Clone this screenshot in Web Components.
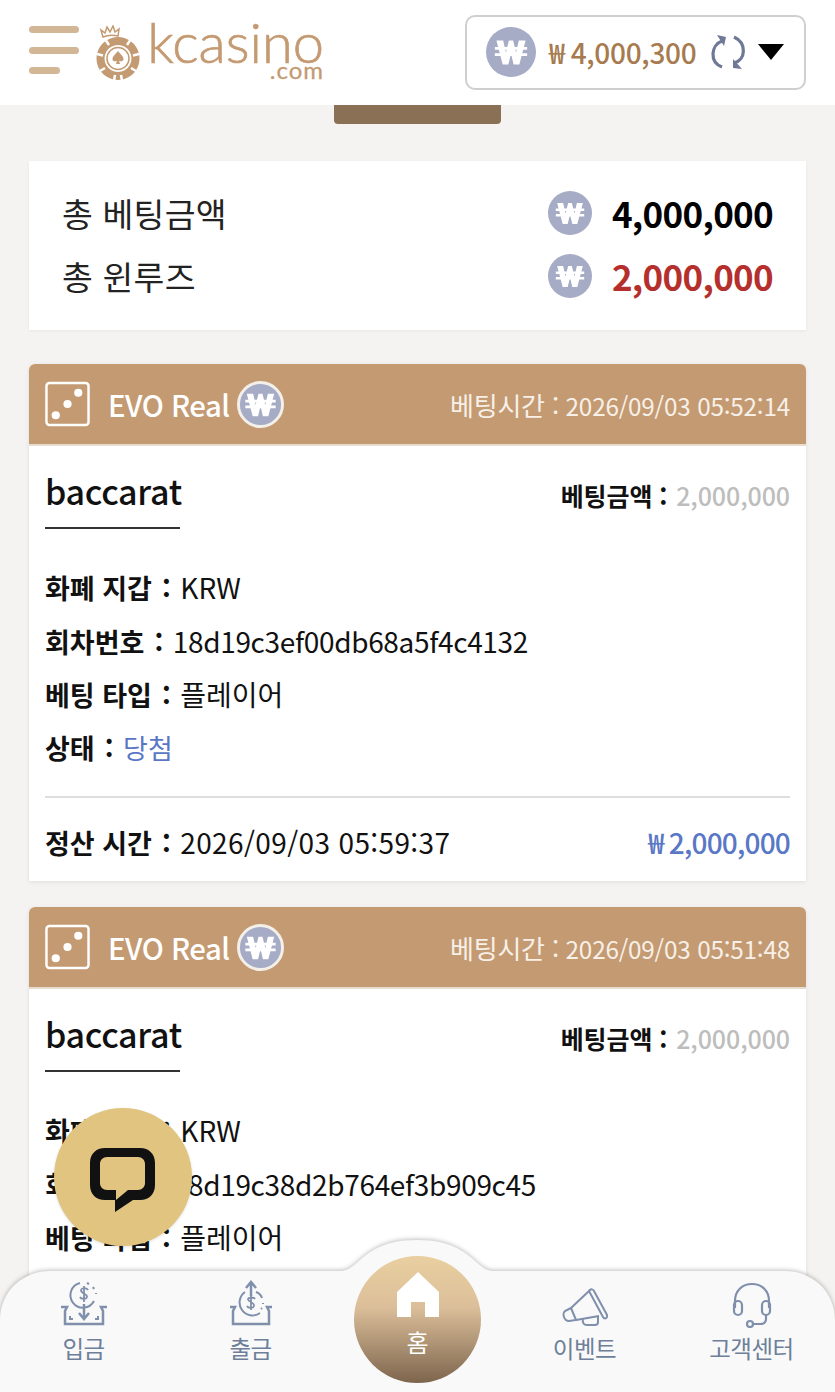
<!DOCTYPE html>
<html lang="ko"><head><meta charset="utf-8"><title>kcasino</title>
<style>
html,body{margin:0;padding:0;background:#f4f3f1}
body{width:835px;height:1392px;overflow:hidden;font-family:"Noto Sans CJK KR","Noto Sans",sans-serif;color:#111}
</style></head>
<body>
<k-app>
  <k-header slot="header"></k-header>
  <k-summary>
    <k-sumrow label="총 베팅금액" value="4,000,000"></k-sumrow>
    <k-sumrow label="총 윈루즈" value="2,000,000" color="#b5302d"></k-sumrow>
  </k-summary>
  <bet-card time="2026/09/03 05:52:14" round="18d19c3ef00db68a5f4c4132" settle="2026/09/03 05:59:37"></bet-card>
  <bet-card time="2026/09/03 05:51:48" round="18d19c38d2b764ef3b909c45"></bet-card>
</k-app>
<script>
const FONT='"Noto Sans CJK KR","Noto Sans",sans-serif';
function el(tag,html,css){
  customElements.define(tag,class extends HTMLElement{
    connectedCallback(){
      if(this.shadowRoot)return;
      const a=n=>this.getAttribute(n)||'';
      this.attachShadow({mode:'open'}).innerHTML='<style>'+css+'</style>'+html(a);
    }
  });
}
el('won-coin',a=>`<svg viewBox="0 0 48 48" width="100%" height="100%"><circle cx="24" cy="24" r="${a('ring')?22.5:24}" fill="#a6abc6" ${a('ring')?'stroke="#f3efe9" stroke-width="3"':''}/>
<path d="M10 13h6.500l2.600 11.500L22 13h4l2.900 11.500L31.500 13H38l-6 23h-5.500L24 25.500 21.500 36H16z" fill="#fff"/><path d="M8.500 20.500h31M8.500 26.500h31" stroke="#fff" stroke-width="2.800"/></svg>`,
':host{display:inline-block;width:48px;height:48px;flex:none}svg{display:block}');

el('k-app',()=>`<slot name="header"></slot><main><div class="tab"></div><slot></slot></main><k-chat></k-chat><k-nav></k-nav>`,
`:host{display:block;position:relative;width:835px;height:1392px;overflow:hidden}
main{display:flex;flex-direction:column;gap:26px;padding:56px 29px 0 29px;position:relative}
.tab{position:absolute;left:334px;top:0;width:167px;height:19px;background:#8a7054;border-radius:0 0 4px 4px}`);

el('k-header',()=>`<button class="burger" aria-label="menu"><i style="width:50px"></i><i style="width:50px"></i><i style="width:31px"></i></button>
<div class="logo">
<svg width="46" height="56" viewBox="0 0 46 56">
 <g fill="none" stroke="#c49a72" stroke-width="1.500"><path d="M8 12L6 5l4 3 2-6 3 5 3-6 2 6 4-3-1 7c-5-1-10-1-15 1z"/></g>
 <g fill="#c49a72"><path fill-rule="evenodd" d="M23 12a21.500 21.500 0 1 0 .01 0zM23 20a13.500 13.500 0 1 1-.01 0z" />
 <circle cx="23" cy="33.500" r="11" fill="none" stroke="#c49a72" stroke-width="1.500"/>
 <path d="M23 26c2 3 5.500 5 5.500 8 0 2.500-3 3-4.500 1.500l1 3.500h-4l1-3.500c-1.500 1.500-4.500 1-4.500-1.500 0-3 3.500-5 5.500-8z"/></g>
 <g stroke="#fff" stroke-width="2.500"><path d="M11 15.500l3 4.500M35 15.500l-3 4.500M2 29l6 1.500M44 29l-6 1.500M5 46l5-3M41 46l-5-3M19 56l1-6M27 56l-1-6"/></g>
</svg>
<div class="word"><span class="k">kcasino</span><span class="com">.com</span></div></div>
<div class="wallet"><won-coin style="width:50px;height:50px"></won-coin><span class="amt">₩ 4,000,300</span>
<svg class="sync" width="36" height="36" viewBox="0 0 36 36" fill="none" stroke="#6f7896" stroke-width="3.200"><path d="M12 7C1 11-1 28 12 33"/><path d="M7 1l9 2-2 9z" fill="#6f7896" stroke="none"/><path d="M24 3c13 6 12 23 0 26"/><path d="M32 35l-9-1v-9z" fill="#6f7896" stroke="none"/></svg>
<span class="caret"></span></div>`,
`:host{display:flex;align-items:center;height:105px;background:#fff;padding:0 29px;box-sizing:border-box;font-family:${FONT};position:relative;z-index:2}
.burger{all:unset;display:flex;flex-direction:column;gap:13.500px;width:50px;margin-top:-5px}
.burger i{display:block;height:7px;border-radius:4px;background:#d3b695}
.logo{display:flex;align-items:flex-start;gap:11px;margin-left:16px;align-self:flex-start;margin-top:25px}
.word{display:flex;flex-direction:column;align-items:flex-end;color:#c49a72;font-family:"Lato",sans-serif;margin-top:-3px;width:172px}
.k{display:block;font-size:56px;font-weight:300;line-height:40px;white-space:nowrap;-webkit-text-stroke:.7px #c49a72}
.com{display:block;font-size:24px;font-weight:400;letter-spacing:1px;margin-top:-1px;line-height:18px;-webkit-text-stroke:.3px #c49a72}
.wallet{margin-left:auto;width:341px;height:75px;box-sizing:border-box;border:2px solid #cfcfcf;border-radius:10px;display:flex;align-items:center;padding:0 19px;margin-top:-1px}
.amt{font-size:28px;font-weight:500;color:#a67b4f;margin-left:13px;letter-spacing:-.3px;white-space:nowrap;word-spacing:0}
.sync{margin-left:14px;flex:none}
.caret{margin-left:12px;width:0;height:0;border:13px solid transparent;border-top:16px solid #000;border-bottom:0}`);

el('k-summary',()=>`<slot></slot>`,
`:host{display:flex;flex-direction:column;gap:8px;height:169px;box-sizing:border-box;padding:24px 33px 0;background:#fff;box-shadow:0 1px 3px rgba(0,0,0,.06);margin-bottom:8px;justify-content:flex-start}`);
el('k-sumrow',a=>`<span class="l">${a('label')}</span><won-coin style="width:44px;height:44px"></won-coin><b style="color:${a('color')||'#000'}">${a('value')}</b>`,
`:host{display:flex;align-items:center;height:55px;font-family:${FONT}}
.l{font-size:33.500px;flex:1;color:#222;letter-spacing:.2px}
b{font-size:35px;font-weight:700;margin-left:19px;width:162px;text-align:right;letter-spacing:-.7px;white-space:nowrap}`);

el('bet-card',a=>`<header>
<svg width="45" height="46" viewBox="0 0 46 46"><rect x="1.500" y="1.500" width="43" height="43" rx="3" fill="none" stroke="#fff" stroke-width="2.500"/><circle cx="34" cy="11.500" r="4.200" fill="#fff"/><circle cx="23" cy="23" r="4.200" fill="#fff"/><circle cx="11" cy="34.500" r="4.200" fill="#fff"/></svg>
<span class="evo">EVO Real</span><won-coin ring="1" style="width:47px;height:47px"></won-coin>
<span class="t"><span class="tk">베팅시간 :</span> ${a('time')}</span></header>
<section>
<div class="top"><h2>baccarat</h2><div class="bet"><b>베팅금액 :</b> <span>2,000,000</span></div></div>
<ul>
<li><b>화폐 지갑<i>:</i></b> <span class="v">KRW</span></li>
<li><b>회차번호<i>:</i></b> <span class="v r">${a('round')}</span></li>
<li><b>베팅 타입<i>:</i></b> <span class="v">플레이어</span></li>
${a('settle')?`<li><b>상태<i>:</i></b> <span class="win v">당첨</span></li>`:''}
</ul>
${a('settle')?`<footer><div><b>정산 시간<i>:</i></b> <span class="v d">${a('settle')}</span></div><div class="pay">₩ 2,000,000</div></footer>`:''}
</section>`,
`:host{display:block;background:#fff;border-radius:6px 6px 0 0;box-shadow:0 1px 4px rgba(0,0,0,.09);font-family:${FONT};color:#111;min-height:484px}
header{background:#c49a72;border-radius:6px 6px 0 0;display:flex;align-items:center;padding:0 16px;color:#fff;border-bottom:2px solid #e6dccf;box-sizing:border-box;height:82px}
.evo{font-size:29.300px;font-weight:500;margin:0 7px 0 18px;letter-spacing:-.5px;white-space:nowrap}
.t{margin-left:auto;font-size:24.300px;letter-spacing:-.2px;color:#f7f0e8;white-space:nowrap}
.tk{font-size:26px;letter-spacing:-.2px}
section{padding:0 16px}
.top{display:flex;justify-content:space-between;align-items:flex-start;height:82px;padding-top:19px;box-sizing:border-box}
h2{margin:0;font-size:34px;font-weight:500;line-height:52px;width:135px;height:64px;box-sizing:border-box;border-bottom:2px solid #333;letter-spacing:-.3px;white-space:nowrap}
.bet{font-size:25px;margin-top:12px;white-space:nowrap;letter-spacing:-.1px}
.bet b{font-weight:700}.bet span{color:#bdbdbd;font-weight:500;margin-left:2px;font-size:25px;letter-spacing:-.1px}
ul{list-style:none;margin:0;padding:40px 0 0;display:flex;flex-direction:column;gap:15.700px}
li{height:38px;line-height:38px;font-size:27px;white-space:nowrap}
b{font-weight:700}
b i{font-style:normal;margin-left:10px;margin-right:2px}
.v{font-size:28px}
.r{letter-spacing:-.33px}
.d{letter-spacing:.37px}
.win{color:#5a77c6;font-size:27px}
footer{margin-top:29px;border-top:2px solid #dedede;display:flex;justify-content:space-between;align-items:center;height:85px;font-size:27px;padding-top:4px;box-sizing:border-box;white-space:nowrap}
.pay{color:#5a77c6;font-weight:500;font-size:28px;letter-spacing:-.8px;word-spacing:0}`);

el('k-chat',()=>`<svg width="76" height="76" viewBox="0 0 76 76"><path fill-rule="evenodd" fill="#111" d="M20 9h35c9 0 15 6 15 15v22c0 9-6 15-15 15h-7L30 73V61h-10C11 61 5 55 5 46V24C5 15 11 9 20 9zM22 18c-4 0-7 3-7 7v19c0 4 3 7 7 7h9v10l12-10h10c4 0 7-3 7-7V25c0-4-3-7-7-7z"/></svg>`,
`:host{position:absolute;left:54px;top:1108px;width:138px;height:138px;border-radius:50%;background:#e0c47f;display:flex;align-items:center;justify-content:center;z-index:3;box-shadow:0 1px 3px rgba(0,0,0,.12)}`);

const G='#7f8fac';
const ICON={
dep:`<svg width="48" height="48" viewBox="0 0 48 48" fill="none" stroke="${G}" stroke-width="2"><path d="M20 3A12.500 12.500 0 1 0 34 21"/><path d="M27 3l2 1M33 7l1 2M36 13v1"/><path d="M28 10c-1-2-6-3-7 0s7 4 6 7-6 2-7 0M24 6v16" stroke-width="1.800"/><path d="M24 24v14M19 33l5 6 5-6" stroke-width="2.500"/><path d="M1 27h6l-2 4v13h38V31l-2-4h6M5 44h38" stroke-width="2.500"/><path d="M10 36v3h3M38 36v3h-3"/></svg>`,
wd:`<svg width="44" height="48" viewBox="0 0 44 48" fill="none" stroke="${G}" stroke-width="2"><path d="M22 16V3M17 8l5-6 5 6" stroke-width="2.500"/><path d="M16 12A11.500 11.500 0 1 0 31 33"/><path d="M27 12c3 1 5 3 6 6M34 23v1M33 28l-1 1"/><path d="M26 19c-1-2-6-2-7 0s7 4 6 7-6 2-7 0M22 15v15" stroke-width="1.800"/><path d="M1 27h5l-2 4v13h36V31l-2-4h5M4 44h36" stroke-width="2.500"/></svg>`,
evt:`<svg width="46" height="40" viewBox="0 0 46 40" fill="none" stroke="${G}" stroke-width="2"><path d="M27 3l14 26c1 2 3 2 4 0 .5-1 0-2-.5-3L32 3c-1-2-3-2-4-1-1 .5-1 1-1 1z"/><path d="M27 3L9 20M37 28L14 32"/><path d="M9 20l-6 3c-2 2-2 3-1 6s3 4 5 4l7-1zM9 20l5 12"/><path d="M21 31c-1 4 1 6 4 6h8c2 0 3-1 3-3v-6"/></svg>`,
cs:`<svg width="42" height="46" viewBox="0 0 42 46" fill="none" stroke="${G}" stroke-width="2.200"><path d="M4 26V19C4 9 11 2 21 2s17 7 17 17v7"/><rect x="3" y="19" width="8" height="14" rx="4"/><rect x="31" y="19" width="8" height="14" rx="4"/><path d="M35 33v4c0 3-2 5-6 5h-8"/><circle cx="19" cy="42" r="3"/></svg>`};
el('k-nav',()=>`<svg class="bg" width="835" height="153" viewBox="0 0 835 153"><path d="M0 153V82C0 50 25 32 50 32H340C352 32 356 22 372 12C384 4 400 1 417 1S450 4 462 12C478 22 482 32 494 32H785C810 32 835 50 835 82V153Z" fill="#f9f9f9"/></svg>
<div class="items">
<a><span class="ic">${ICON.dep}</span>입금</a>
<a><span class="ic">${ICON.wd}</span>출금</a>
<div class="gap"></div>
<a><span class="ic">${ICON.evt}</span>이벤트</a>
<a><span class="ic">${ICON.cs}</span>고객센터</a>
</div>
<div class="home"><svg width="42" height="45" viewBox="0 0 42 45"><path d="M21 0L42 20v25H28V30H14v15H0V20z" fill="#fff"/></svg><span>홈</span></div>`,
`:host{position:absolute;left:0;top:1239px;width:835px;height:153px;z-index:4;font-family:${FONT}}
.bg{position:absolute;inset:0;filter:drop-shadow(0 -1px 2px rgba(0,0,0,.25))}
.items{position:absolute;left:0;right:0;top:32px;bottom:0;display:grid;grid-template-columns:repeat(5,167px)}
a{display:flex;flex-direction:column;align-items:center;color:#6d7f99;font-size:23.500px;letter-spacing:-.5px;white-space:nowrap;padding-top:9px;line-height:36px}
.ic{height:48px;display:flex;align-items:flex-end;margin-bottom:2px}
.home{position:absolute;left:354px;top:17px;width:127px;height:127px;border-radius:50%;background:linear-gradient(#e9cfa0,#dcbf9a 40%,#7d654d);display:flex;flex-direction:column;align-items:center;color:#fff;padding-top:16px;box-sizing:border-box;font-size:24px;line-height:34px}
.home span{margin-top:8px}`);
</script>
</body></html>
